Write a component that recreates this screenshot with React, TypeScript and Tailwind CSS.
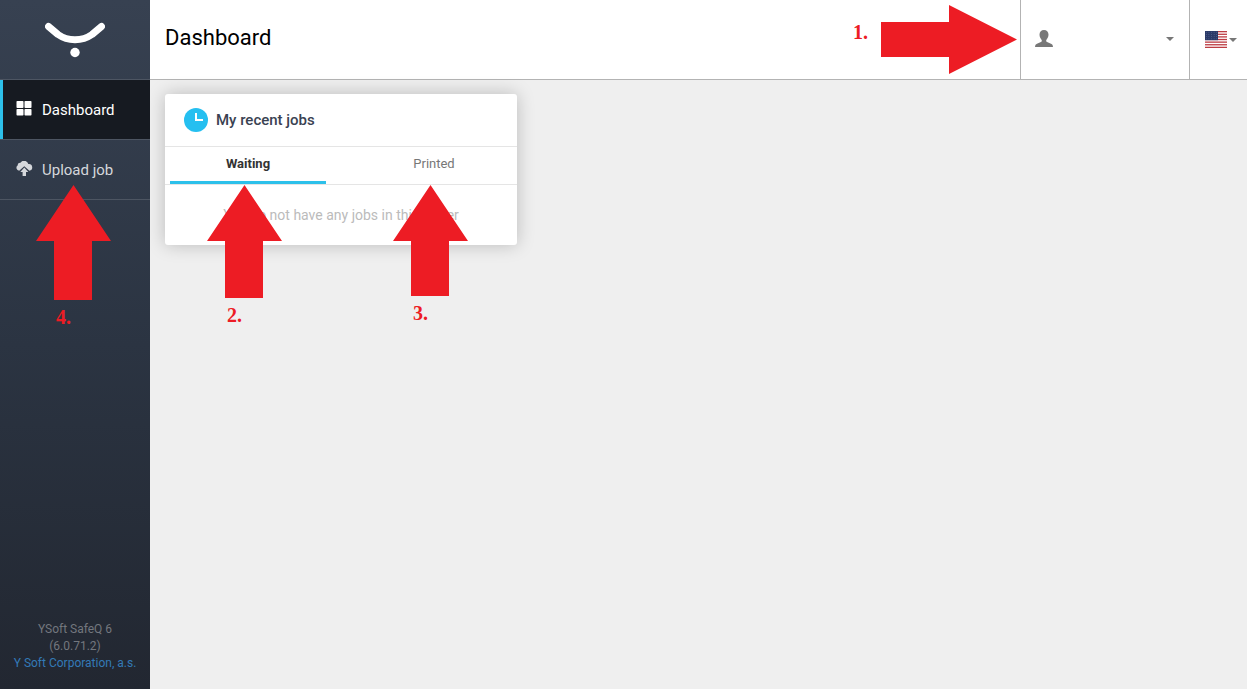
import type { ReactNode } from 'react'
import { useState } from 'react'

type NavItemProps = {
  label: string
  icon: ReactNode
  active?: boolean
  children?: ReactNode
}

type TabProps = {
  label: string
  active: boolean
  onSelect: () => void
  children?: ReactNode
}

function Logo() {
  return (
    <svg width="60" height="36" viewBox="0 0 60 36" role="img" aria-label="Y Soft">
      <path d="M3.5 4.5 L13 12.5 C23 19.5 37 19.5 47 12.5 L56.5 4.5" fill="none" stroke="#fff" strokeWidth="7" strokeLinecap="round" strokeLinejoin="round" />
      <circle cx="30" cy="30.5" r="4.7" fill="#fff" />
    </svg>
  )
}

function GridIcon() {
  return (
    <svg width="16" height="15" viewBox="0 0 16 15" fill="currentColor" aria-hidden="true">
      <rect x="0.5" y="0" width="7" height="7" rx="0.8" />
      <rect x="8.5" y="0" width="7" height="7" rx="0.8" />
      <rect x="0.5" y="8" width="7" height="6.5" rx="0.8" />
      <rect x="8.5" y="8" width="7" height="6.5" rx="0.8" />
    </svg>
  )
}

function CloudUploadIcon() {
  return (
    <svg width="17" height="15" viewBox="0 0 17 15" fill="currentColor" aria-hidden="true">
      <path d="M3.2 9.8 A3 3 0 0 1 1.8 4.3 A2.3 2.3 0 0 1 4.5 1.7 A4.3 4.3 0 0 1 12.3 3.1 A3.3 3.3 0 1 1 13.4 9.7 L8.3 5.2 Z" />
      <path d="M8.3 6.6 L12.3 10.9 H10 V15 H6.6 V10.9 H4.3 Z" />
    </svg>
  )
}

function UserIcon() {
  return (
    <svg width="18" height="17" viewBox="0 0 18 17" fill="currentColor" aria-hidden="true">
      <path d="M9 0 C6.3 0 4.5 1.7 4.5 4.6 C4.5 6.9 5.5 8.8 6.7 9.9 C7 10.9 6.7 11.6 5.9 12 L2 13.7 C0.7 14.3 0.2 15 0 17 H18 C17.8 15 17.3 14.3 16 13.7 L12.1 12 C11.3 11.6 11 10.9 11.3 9.9 C12.5 8.8 13.5 6.9 13.5 4.6 C13.5 1.7 11.7 0 9 0 Z" />
    </svg>
  )
}

function ClockIcon() {
  return (
    <svg width="24" height="24" viewBox="0 0 24 24" aria-hidden="true">
      <circle cx="12" cy="12" r="12" fill="#25bff0" />
      <path d="M12 5 V12 H19" fill="none" stroke="#fff" strokeWidth="2" />
    </svg>
  )
}

function Caret() {
  return (
    <svg width="8" height="4" viewBox="0 0 8 4" fill="currentColor" aria-hidden="true">
      <path d="M0 0 H8 L4 4 Z" />
    </svg>
  )
}

function FlagIcon() {
  const stripes = [0, 1, 2, 3, 4, 5, 6]
  const stars = [0, 1, 2, 3, 4, 5, 6, 7, 8, 9, 10, 11, 12, 13, 14, 15, 16, 17, 18, 19]

  return (
    <svg width="22" height="17" viewBox="0 0 22 17" aria-hidden="true">
      <rect width="22" height="17" fill="#fff" />
      {stripes.map((i) => (
        <rect key={i} y={i * 2.62} width="22" height="1.31" fill="#bd3d44" />
      ))}
      <rect width="13" height="9.2" fill="#2b3a68" />
      {stars.map((i) => (
        <circle key={i} cx={1.3 + (i % 5) * 2.6} cy={1.2 + Math.floor(i / 5) * 2.2} r="0.4" fill="#7f8cb5" />
      ))}
    </svg>
  )
}

// Arrow pointing up, the shaft grows with the height
function UpArrow({ height }: { height: number }) {
  return (
    <svg width="75" height={height} viewBox={`0 0 75 ${height}`} fill="#ed1c24" aria-hidden="true">
      <path d={`M37.5 0 L75 56 H56 V${height} H18 V56 H0 Z`} />
    </svg>
  )
}

function RightArrow() {
  return (
    <svg width="136" height="69" viewBox="0 0 136 69" fill="#ed1c24" aria-hidden="true">
      <path d="M0 17 H68 V0 L136 34.5 L68 69 V52 H0 Z" />
    </svg>
  )
}

function NavItem({ label, icon, active, children }: NavItemProps) {
  return (
    <li className="relative border-b border-[#4d5562]">
      <a
        href="#"
        aria-current={active ? 'page' : undefined}
        className={`flex h-[59px] items-center gap-2 border-l-3 pt-0.5 pl-[13px] text-[15px] ${
          active ? 'border-[#2dc0ea] bg-[#161a21] text-white' : 'border-transparent text-[#d5d7db]'
        }`}
      >
        <span className="flex w-[18px] pb-1">{icon}</span>
        {label}
      </a>
      {children}
    </li>
  )
}

function Tab({ label, active, onSelect, children }: TabProps) {
  return (
    <div className="relative flex-1">
      <button
        type="button"
        role="tab"
        aria-selected={active}
        onClick={onSelect}
        className={`h-[37px] w-full border-b-3 text-[13px] ${
          active ? 'border-[#2dc0ea] font-bold text-[#333]' : 'border-transparent text-[#777]'
        }`}
      >
        {label}
      </button>
      {children}
    </div>
  )
}

export default function App() {
  const [tab, setTab] = useState('waiting')

  return (
    <div className="flex min-h-screen bg-[#efefef] font-['Roboto',sans-serif]">
      <aside className="relative z-10 flex w-[150px] shrink-0 flex-col bg-linear-to-b from-[#374151] via-[#2b3442] to-[#222731]">
        <div className="flex h-20 items-center justify-center border-b border-[#4d5562]">
          <Logo />
        </div>
        <nav>
          <ul>
            <NavItem label="Dashboard" icon={<GridIcon />} active />
            <NavItem label="Upload job" icon={<CloudUploadIcon />}>
              <div className="pointer-events-none absolute top-[45px] left-9 flex flex-col items-start gap-[3px]">
                <UpArrow height={115} />
                <span className="pl-5 font-['Liberation_Serif',serif] text-xl font-bold text-[#ed1c24]">4.</span>
              </div>
            </NavItem>
          </ul>
        </nav>
        <footer className="mt-auto pb-[17px] text-center text-xs leading-[17px] text-[#73777e]">
          <p>YSoft SafeQ 6</p>
          <p>(6.0.71.2)</p>
          <a href="#" className="text-[#337ab7]">Y Soft Corporation, a.s.</a>
        </footer>
      </aside>

      <div className="min-w-0 flex-1">
        <header className="flex h-20 items-stretch border-b border-[#b3b3b3] bg-white">
          <h1 className="flex-1 self-center pb-1 pl-[15px] text-[22px] text-black">Dashboard</h1>
          <div className="relative w-[169px] border-l border-[#b3b3b3]">
            <button type="button" aria-label="User menu" className="flex h-full w-full items-center justify-between pr-[15px] pb-0.5 pl-[14px] text-[#777]">
              <UserIcon />
              <Caret />
            </button>
            <div className="pointer-events-none absolute top-[5px] right-full mr-1 flex items-start gap-[13px]">
              <span className="pt-[13px] font-['Liberation_Serif',serif] text-xl font-bold text-[#ed1c24]">1.</span>
              <RightArrow />
            </div>
          </div>
          <button type="button" aria-label="Language" className="flex w-[58px] items-center gap-0.5 border-l border-[#b3b3b3] pl-[15px] text-[#777]">
            <FlagIcon />
            <Caret />
          </button>
        </header>

        <main className="px-[15px] pt-3.5">
          <section className="w-full max-w-[352px] rounded-[3px] bg-white shadow-[0_0_18px_rgba(0,0,0,0.22)]">
            <div className="flex h-[53px] items-center gap-2 border-b border-[#e5e5e5] px-[19px]">
              <ClockIcon />
              <h2 className="text-[15px] font-medium text-[#3a4252]">My recent jobs</h2>
            </div>
            <div role="tablist" className="flex gap-[30px] border-b border-[#e5e5e5] px-[5px]">
              <Tab label="Waiting" active={tab === 'waiting'} onSelect={() => setTab('waiting')}>
                <div className="pointer-events-none absolute top-[38px] left-[37px] flex flex-col items-start gap-[3px]">
                  <UpArrow height={113} />
                  <span className="pl-5 font-['Liberation_Serif',serif] text-xl font-bold text-[#ed1c24]">2.</span>
                </div>
              </Tab>
              <Tab label="Printed" active={tab === 'printed'} onSelect={() => setTab('printed')}>
                <div className="pointer-events-none absolute top-[38px] left-[37px] flex flex-col items-start gap-[3px]">
                  <UpArrow height={111} />
                  <span className="pl-5 font-['Liberation_Serif',serif] text-xl font-bold text-[#ed1c24]">3.</span>
                </div>
              </Tab>
            </div>
            <p className="py-5 text-center text-sm text-[#bbb]">You do not have any jobs in this folder</p>
          </section>
        </main>
      </div>
    </div>
  )
}
